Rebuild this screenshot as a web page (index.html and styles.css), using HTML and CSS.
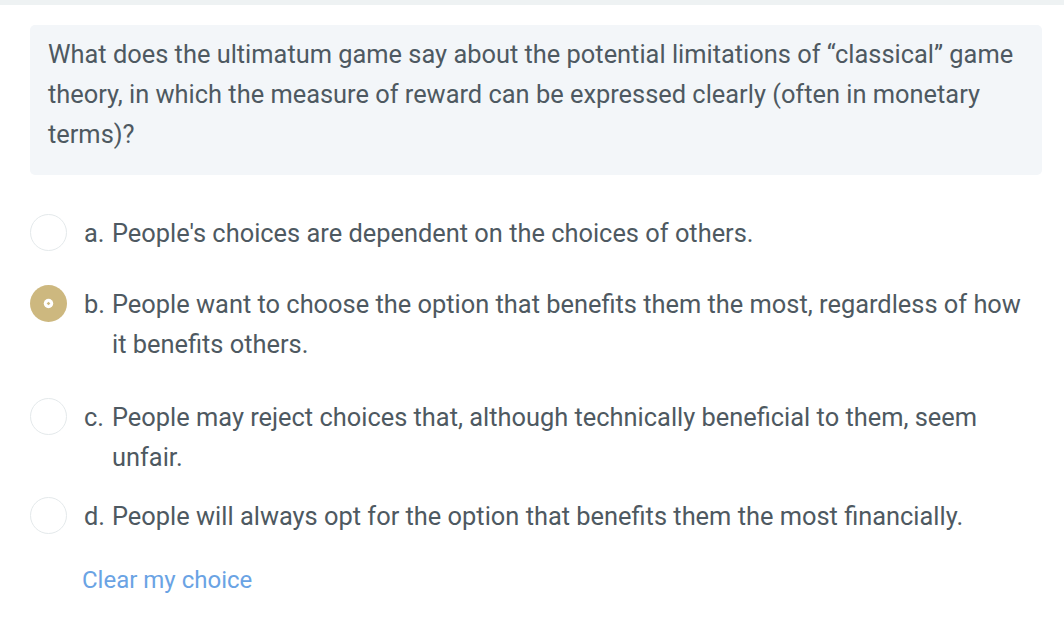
FILE: index.html
```html
<!DOCTYPE html>
<html>
<head>
<meta charset="utf-8">
<link rel="stylesheet" href="styles.css">
</head>
<body>
<div class="topbar"></div>
<main class="page">
  <div class="question">
    <p>What does the ultimatum game say about the potential limitations of “classical” game theory, in which the measure of reward can be expressed clearly (often in monetary terms)?</p>
  </div>
  <div class="options">
    <div class="option">
      <span class="radio"></span>
      <span class="label">a.</span>
      <span class="text">People's choices are dependent on the choices of others.</span>
    </div>
    <div class="option selected">
      <span class="radio checked">
        <svg width="36" height="36" viewBox="0 0 36 36"><circle cx="18" cy="18" r="18" fill="#cdb87f"/><circle cx="18" cy="18" r="4.6" fill="#ffffff"/><path d="M18 16.2 L19.8 18 L18 19.8 L16.2 18 Z" fill="#cdb87f"/></svg>
      </span>
      <span class="label">b.</span>
      <span class="text">People want to choose the option that benefits them the most, regardless of how it benefits others.</span>
    </div>
    <div class="option">
      <span class="radio"></span>
      <span class="label">c.</span>
      <span class="text">People may reject choices that, although technically beneficial to them, seem unfair.</span>
    </div>
    <div class="option">
      <span class="radio"></span>
      <span class="label">d.</span>
      <span class="text">People will always opt for the option that benefits them the most financially.</span>
    </div>
  </div>
  <a class="clear" href="#">Clear my choice</a>
</main>
</body>
</html>
```
FILE: styles.css
```css
html, body {
  margin: 0;
  padding: 0;
  background: #ffffff;
}
body {
  font-family: Roboto, "Liberation Sans", Arial, sans-serif;
  font-size: 25.4px;
  line-height: 40px;
  color: #4e5961;
}
.topbar {
  height: 5px;
  background: #eef2f3;
}
.page {
  padding: 20px 22px 0 30px;
  display: flex;
  flex-direction: column;
  align-items: flex-start;
}
.question {
  align-self: stretch;
  background: #f3f6f9;
  border-radius: 5px;
  padding: 9px 18px 21px 18px;
}
.question p {
  margin: 0;
}
.options {
  align-self: stretch;
  display: flex;
  flex-direction: column;
  gap: 19px;
  margin-top: 38px;
  margin-right: 3px;
}
.option {
  display: flex;
  align-items: flex-start;
}
.option.selected {
  padding: 12px 0 14px 0;
}
.radio {
  flex: none;
  box-sizing: border-box;
  width: 37px;
  height: 37px;
  border: 1px solid #e4e9eb;
  border-radius: 50%;
  margin-top: 1px;
  margin-right: 17px;
  background: #ffffff;
}
.radio.checked {
  border: none;
  display: flex;
  align-items: center;
  justify-content: center;
  background: transparent;
}
.radio.checked svg {
  width: 37px;
  height: 37px;
  display: block;
}
.label {
  flex: none;
  width: 28px;
}
.text {
  flex: 1;
}
.clear {
  margin-top: 24px;
  margin-left: 52px;
  font-size: 24px;
  color: #6aa3e4;
  text-decoration: none;
}
```
